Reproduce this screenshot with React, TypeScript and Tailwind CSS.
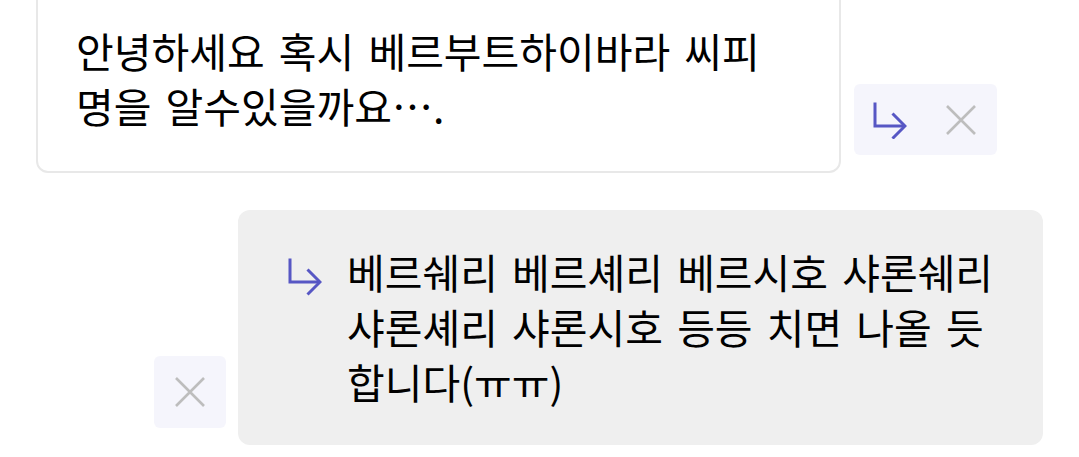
import React from 'react'

function ReplyArrow({ className }: { className?: string }) {
  return (
    <svg viewBox="0 0 34 38" fill="none" className={className}>
      <path d="M2 1.5V25H32" stroke="currentColor" strokeWidth="3" />
      <path d="M19.5 12.5L32 25L19.5 37.5" stroke="currentColor" strokeWidth="3" />
    </svg>
  )
}

function CloseIcon({ className }: { className?: string }) {
  return (
    <svg viewBox="0 0 30 30" fill="none" className={className}>
      <path d="M1 1L29 29M29 1L1 29" stroke="currentColor" strokeWidth="2.6" />
    </svg>
  )
}

export default function App() {
  const font = "[font-family:'Noto_Sans_CJK_KR',sans-serif]"

  return (
    <div className={`w-[1079px] h-[457px] overflow-hidden bg-white ${font}`}>
      {/* original message */}
      <div className="flex items-end">
        <div className="ml-[36px] -mt-[15px] w-[805px] rounded-[12px] border-2 border-[#e8e8e8] bg-white pl-[38px] pr-[36px] pt-[36px] pb-[38px]">
          <p className="break-keep text-[41px] leading-[55px] text-black [word-spacing:5px]">
            안녕하세요 혹시 베르부트하이바라 씨피 명을 알수있을까요….
          </p>
        </div>
        <div className="ml-[13px] mb-[18px] flex h-[71px] w-[143px] items-center rounded-[6px] bg-[#f5f5fc]">
          <div className="flex w-[72px] justify-center">
            <ReplyArrow className="h-[38px] w-[34px] text-[#5757c4]" />
          </div>
          <div className="flex w-[72px] justify-center">
            <CloseIcon className="h-[30px] w-[30px] text-[#bdbdbd]" />
          </div>
        </div>
      </div>

      {/* reply */}
      <div className="mt-[37px] flex items-end">
        <div className="ml-[154px] mb-[17px] flex h-[72px] w-[72px] items-center justify-center rounded-[6px] bg-[#f5f5fc]">
          <CloseIcon className="h-[30px] w-[30px] text-[#bdbdbd]" />
        </div>
        <div className="ml-[12px] flex w-[805px] gap-[25px] rounded-[12px] bg-[#efefef] pl-[50px] pr-[30px] pt-[34px] pb-[36px]">
          <ReplyArrow className="mt-[12px] h-[40px] w-[34px] shrink-0 text-[#5757c4]" />
          <p className="break-keep text-[41px] leading-[55px] text-black [word-spacing:5px]">
            베르쉐리 베르셰리 베르시호 샤론쉐리 샤론셰리 샤론시호 등등 치면 나올 듯 합니다(ㅠㅠ)
          </p>
        </div>
      </div>
    </div>
  )
}
